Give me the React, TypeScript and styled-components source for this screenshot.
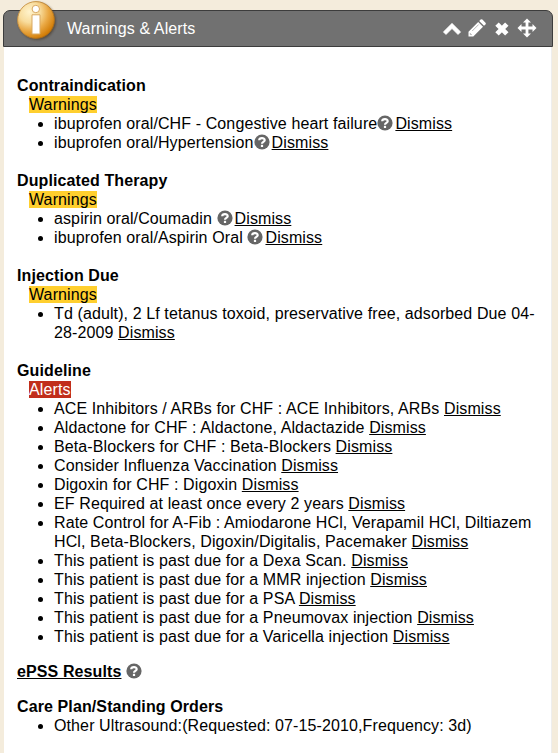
import React from "react";
import styled, { createGlobalStyle } from "styled-components";

const GlobalStyle = createGlobalStyle`
  body {
    margin: 0;
    background: #f4ecdc;
    font: 16px/19px "Liberation Sans", Arial, sans-serif;
    letter-spacing: 0.11px;
    color: #000;
  }
`;

const Page = styled.main`
  box-sizing: border-box;
  height: 753px;
  overflow: hidden;
  padding: 10px 5px 0 3px;
`;

const Panel = styled.section`
  position: relative;
`;

const Header = styled.header`
  box-sizing: border-box;
  height: 37px;
  display: flex;
  align-items: center;
  justify-content: space-between;
  padding: 0 15px 0 63px;
  background: #717171;
  border: 1px solid #3c3c3c;
  border-radius: 7px 7px 0 0;
  color: #fff;
`;

const Title = styled.h1`
  margin: 0;
  font-size: 16px;
  font-weight: 400;
`;

const Tools = styled.div`
  display: flex;
  align-items: center;
  gap: 5px;
  margin-bottom: 1px;
`;

const ToolButton = styled.button`
  display: flex;
  padding: 0;
  border: 0;
  background: none;
  color: #fff;
`;

const Badge = styled.svg`
  position: absolute;
  left: 13px;
  top: -10px;
`;

const Body = styled.div`
  box-sizing: border-box;
  height: 706px;
  margin: 0 1px;
  padding: 29px 13px 0 13px;
  background: #fff;
  border-right: 1px solid #eeeeee;
`;

const Group = styled.section<{ $gap: number }>`
  margin-bottom: ${(p) => p.$gap}px;
`;

const Heading = styled.h2`
  margin: 0;
  font-size: 16px;
  font-weight: 700;
`;

const LevelRow = styled.div`
  height: 19px;
  padding-left: 12px;
`;

const Level = styled.span<{ $alert?: boolean }>`
  background: ${(p) => (p.$alert ? "#c12e1b" : "#ffcf2e")};
  color: ${(p) => (p.$alert ? "#fff" : "#000")};
`;

const List = styled.ul`
  margin: 0;
  padding-left: 37px;
`;

const Link = styled.a`
  color: inherit;
  text-decoration: underline;
`;

const HelpSvg = styled.svg`
  display: inline-block;
  width: 16px;
  height: 16px;
  margin-right: -2.5px;
  vertical-align: -2px;
`;

const Help = () => (
  <HelpSvg viewBox="0 0 16 16" aria-label="Help">
    <circle cx="8" cy="8" r="7.6" fill="#666" />
    <path d="M5.2 6.3C5.3 3.5 10.7 3.3 10.7 6.2C10.7 7.9 8 7.8 8 9.7" fill="none" stroke="#fff" strokeWidth="2.2" />
    <path d="M6.9 10.8h2.200v2.200H6.900z" fill="#fff" />
  </HelpSvg>
);

const InfoBadge = () => (
  <Badge width="44" height="42" viewBox="0 0 44 42" aria-label="Information">
    <defs>
      <radialGradient id="gold" cx="32%" cy="28%" r="76%">
        <stop offset="0" stopColor="#fff3cc" />
        <stop offset=".38" stopColor="#f8dc9c" />
        <stop offset=".68" stopColor="#eaa945" />
        <stop offset="1" stopColor="#d17b04" />
      </radialGradient>
      <linearGradient id="rim" x1="0" y1="0" x2="1" y2="1">
        <stop offset="0" stopColor="#d6a65c" />
        <stop offset="1" stopColor="#9c5d0b" />
      </linearGradient>
      <filter id="soft" x="-20%" y="-20%" width="140%" height="140%">
        <feGaussianBlur stdDeviation="1" />
      </filter>
    </defs>
    <circle cx="21.2" cy="21.2" r="18.7" fill="#3c2c18" opacity=".55" filter="url(#soft)" />
    <circle cx="20" cy="20" r="18.4" fill="url(#gold)" stroke="url(#rim)" strokeWidth="1" />
    <circle cx="19.8" cy="9" r="3.7" fill="#fff" stroke="#d9a860" strokeWidth="1" />
    <path d="M16 14.800h8v19.200h-8z" fill="#fff" stroke="#d9a860" strokeWidth="1" />
  </Badge>
);

const ToolIcon = ({ width, children }: { width: number; children: React.ReactNode }) => (
  <svg width={width} height="20" viewBox={`0 0 ${width} 20`} fill="currentColor">
    {children}
  </svg>
);

type Item = { text: string; help?: boolean; dismiss?: boolean };

const ItemRow = ({ text, help, dismiss = true }: Item) => (
  <li>
    {text}
    {help && <Help />}
    {dismiss && <> <Link>Dismiss</Link></>}
  </li>
);

const groups: { title: string; alert?: boolean; gap: number; items: Item[] }[] = [
  {
    title: "Contraindication",
    gap: 19,
    items: [
      { text: "ibuprofen oral/CHF - Congestive heart failure", help: true },
      { text: "ibuprofen oral/Hypertension", help: true },
    ],
  },
  {
    title: "Duplicated Therapy",
    gap: 19,
    items: [
      { text: "aspirin oral/Coumadin ", help: true },
      { text: "ibuprofen oral/Aspirin Oral ", help: true },
    ],
  },
  {
    title: "Injection Due",
    gap: 19,
    items: [{ text: "Td (adult), 2 Lf tetanus toxoid, preservative free, adsorbed Due 04-28-2009" }],
  },
  {
    title: "Guideline",
    alert: true,
    gap: 16,
    items: [
      { text: "ACE Inhibitors / ARBs for CHF : ACE Inhibitors, ARBs" },
      { text: "Aldactone for CHF : Aldactone, Aldactazide" },
      { text: "Beta-Blockers for CHF : Beta-Blockers" },
      { text: "Consider Influenza Vaccination" },
      { text: "Digoxin for CHF : Digoxin" },
      { text: "EF Required at least once every 2 years" },
      { text: "Rate Control for A-Fib : Amiodarone HCl, Verapamil HCl, Diltiazem HCl, Beta-Blockers, Digoxin/Digitalis, Pacemaker" },
      { text: "This patient is past due for a Dexa Scan. " },
      { text: "This patient is past due for a MMR injection" },
      { text: "This patient is past due for a PSA" },
      { text: "This patient is past due for a Pneumovax injection" },
      { text: "This patient is past due for a Varicella injection" },
    ],
  },
];

export default function App() {
  return (
    <Page>
      <GlobalStyle />
      <Panel>
        <Header>
          <Title>Warnings &amp; Alerts</Title>
          <Tools>
            <ToolButton aria-label="Collapse">
              <ToolIcon width={20}>
                <path
                  d="M10 5.300l8.700 8.600-2.700 2.700-6-6-6 6-2.700-2.700z"
                  stroke="currentColor"
                  strokeWidth=".6"
                  strokeLinejoin="round"
                />
              </ToolIcon>
            </ToolButton>
            <ToolButton aria-label="Edit">
              <ToolIcon width={20}>
                <path d="M1.500 13.700L11.200 4l4.800 4.800-9.700 9.700H1.500zM12.200 3l1.400-1.400q.9-.9 1.800 0l3.100 3.100q.8.8 0 1.700L17 7.800z" />
                <path d="M5.200 13l6.500-6.500M3.300 15v1.600h1.600" fill="none" stroke="#999" strokeWidth=".7" />
              </ToolIcon>
            </ToolButton>
            <ToolButton aria-label="Close">
              <ToolIcon width={20}>
                <path
                  d="M5 6.100l9.800 9.800M14.800 6.100l-9.800 9.800"
                  stroke="currentColor"
                  strokeWidth="4.800"
                />
              </ToolIcon>
            </ToolButton>
            <ToolButton aria-label="Move">
              <ToolIcon width={20}>
                <path d="M10 .5l4 4h-2.6v4.1h4.1V6l4 4-4 4v-2.6h-4.1v4.1H14l-4 4-4-4h2.6v-4.1H4.500V14l-4-4 4-4v2.600h4.100V4.500H6z" />
              </ToolIcon>
            </ToolButton>
          </Tools>
        </Header>
        <InfoBadge />
        <Body>
          {groups.map((g) => (
            <Group key={g.title} $gap={g.gap}>
              <Heading>{g.title}</Heading>
              <LevelRow>
                <Level $alert={g.alert}>{g.alert ? "Alerts" : "Warnings"}</Level>
              </LevelRow>
              <List>
                {g.items.map((item) => (
                  <ItemRow key={item.text} {...item} />
                ))}
              </List>
            </Group>
          ))}
          <Group $gap={16}>
            <Heading>
              <Link>ePSS Results</Link> <Help />
            </Heading>
          </Group>
          <Group $gap={0}>
            <Heading>Care Plan/Standing Orders</Heading>
            <List>
              <ItemRow text="Other Ultrasound:(Requested: 07-15-2010,Frequency: 3d)" dismiss={false} />
            </List>
          </Group>
        </Body>
      </Panel>
    </Page>
  );
}
